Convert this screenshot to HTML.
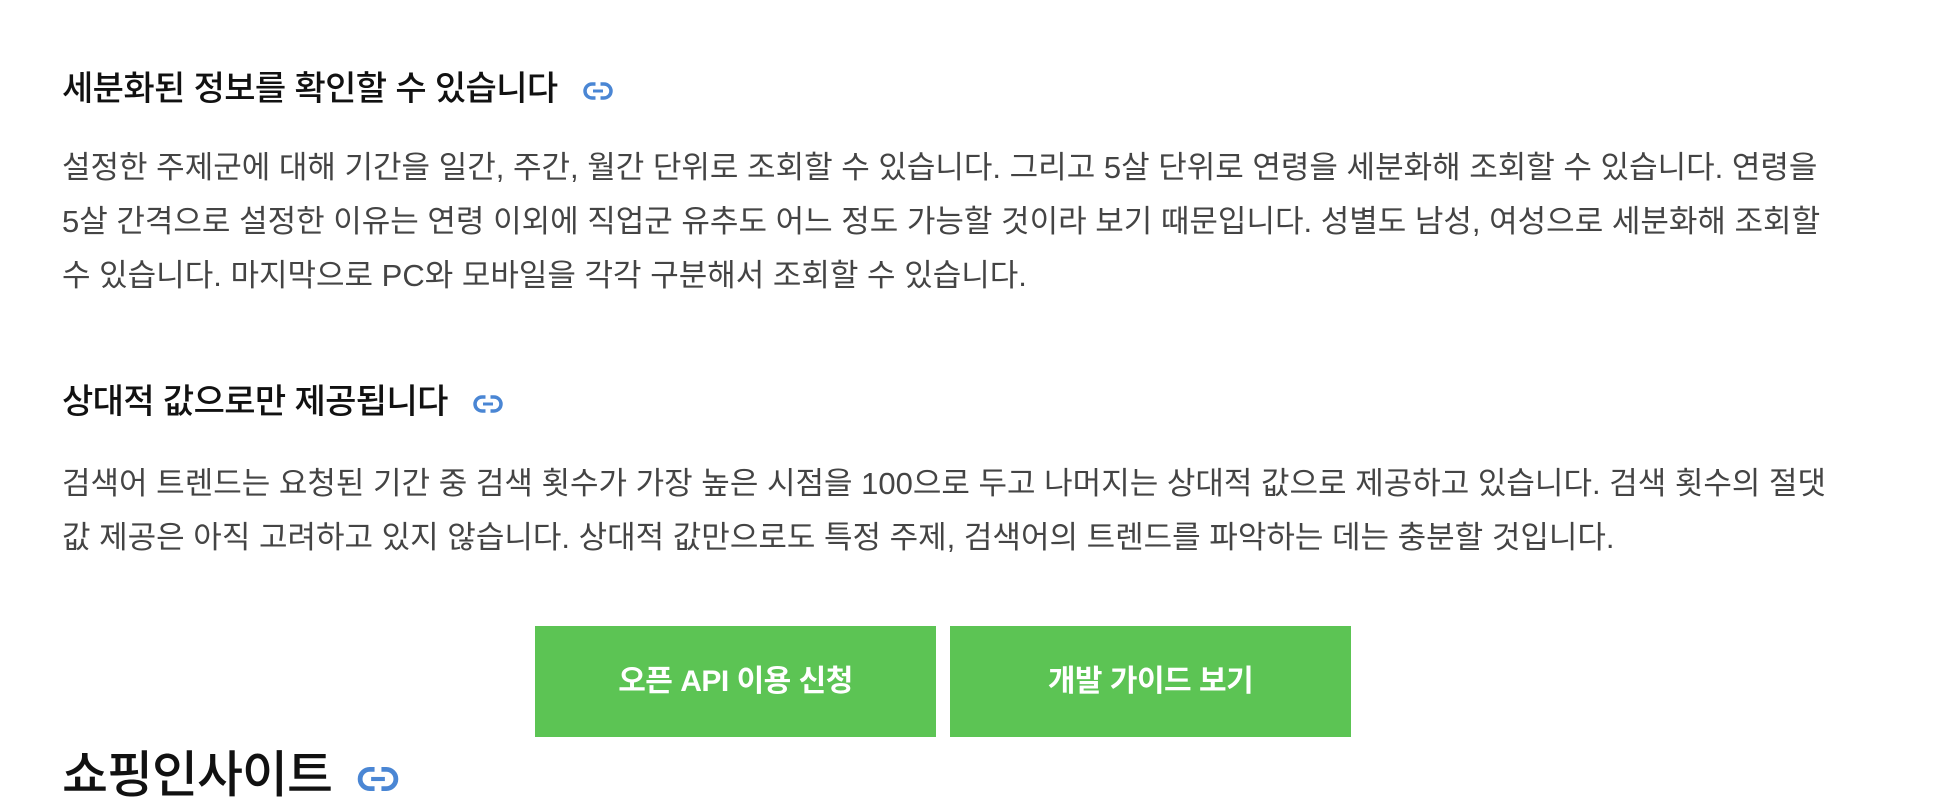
<!DOCTYPE html>
<html><head><meta charset="utf-8"><style>
body{margin:0;width:1950px;height:810px;background:#fff;overflow:hidden;font-family:"Liberation Sans","Noto Sans CJK KR",sans-serif;position:relative}
.h{position:absolute;left:62px;font-size:34px;font-weight:500;color:#111;white-space:nowrap;letter-spacing:-0.6px;line-height:1}
.p{position:absolute;left:62px;font-size:31px;color:#444;white-space:nowrap;line-height:54px;letter-spacing:0}
.ic{display:inline-block;vertical-align:middle;margin-left:24px}
.btn{position:absolute;top:626px;height:111px;width:401px;background:#5cc454;color:#fff;font-size:30px;font-weight:700;text-align:center;line-height:111px;letter-spacing:-0.5px}
</style></head><body>
<div class="h" style="top:72px">세분화된 정보를 확인할 수 있습니다<svg class="ic" width="32" height="20" viewBox="0 0 32 20"><rect x="3" y="3" width="26" height="14" rx="7" fill="none" stroke="#4a86d4" stroke-width="3.5"/><line x1="11" y1="10" x2="21" y2="10" stroke="#4a86d4" stroke-width="3"/><rect x="13.5" y="1" width="5" height="4" fill="#fff"/><rect x="13.5" y="15" width="5" height="4" fill="#fff"/></svg></div>
<div class="p" style="top:141px">설정한 주제군에 대해 기간을 일간, 주간, 월간 단위로 조회할 수 있습니다. 그리고 5살 단위로 연령을 세분화해 조회할 수 있습니다. 연령을<br>5살 간격으로 설정한 이유는 연령 이외에 직업군 유추도 어느 정도 가능할 것이라 보기 때문입니다. 성별도 남성, 여성으로 세분화해 조회할<br>수 있습니다. 마지막으로 PC와 모바일을 각각 구분해서 조회할 수 있습니다.</div>
<div class="h" style="top:385px">상대적 값으로만 제공됩니다<svg class="ic" width="32" height="20" viewBox="0 0 32 20"><rect x="3" y="3" width="26" height="14" rx="7" fill="none" stroke="#4a86d4" stroke-width="3.5"/><line x1="11" y1="10" x2="21" y2="10" stroke="#4a86d4" stroke-width="3"/><rect x="13.5" y="1" width="5" height="4" fill="#fff"/><rect x="13.5" y="15" width="5" height="4" fill="#fff"/></svg></div>
<div class="p" style="top:457px">검색어 트렌드는 요청된 기간 중 검색 횟수가 가장 높은 시점을 100으로 두고 나머지는 상대적 값으로 제공하고 있습니다. 검색 횟수의 절댓<br>값 제공은 아직 고려하고 있지 않습니다. 상대적 값만으로도 특정 주제, 검색어의 트렌드를 파악하는 데는 충분할 것입니다.</div>
<div class="btn" style="left:535px">오픈 API 이용 신청</div>
<div class="btn" style="left:950px">개발 가이드 보기</div>
<div class="h" style="top:750px;font-size:50px;letter-spacing:-1px">쇼핑인사이트<svg class="ic" width="44" height="28" viewBox="0 0 32 20"><rect x="3" y="3" width="26" height="14" rx="7" fill="none" stroke="#4a86d4" stroke-width="3.5"/><line x1="11" y1="10" x2="21" y2="10" stroke="#4a86d4" stroke-width="3"/><rect x="13.5" y="1" width="5" height="4" fill="#fff"/><rect x="13.5" y="15" width="5" height="4" fill="#fff"/></svg></div>
</body></html>
